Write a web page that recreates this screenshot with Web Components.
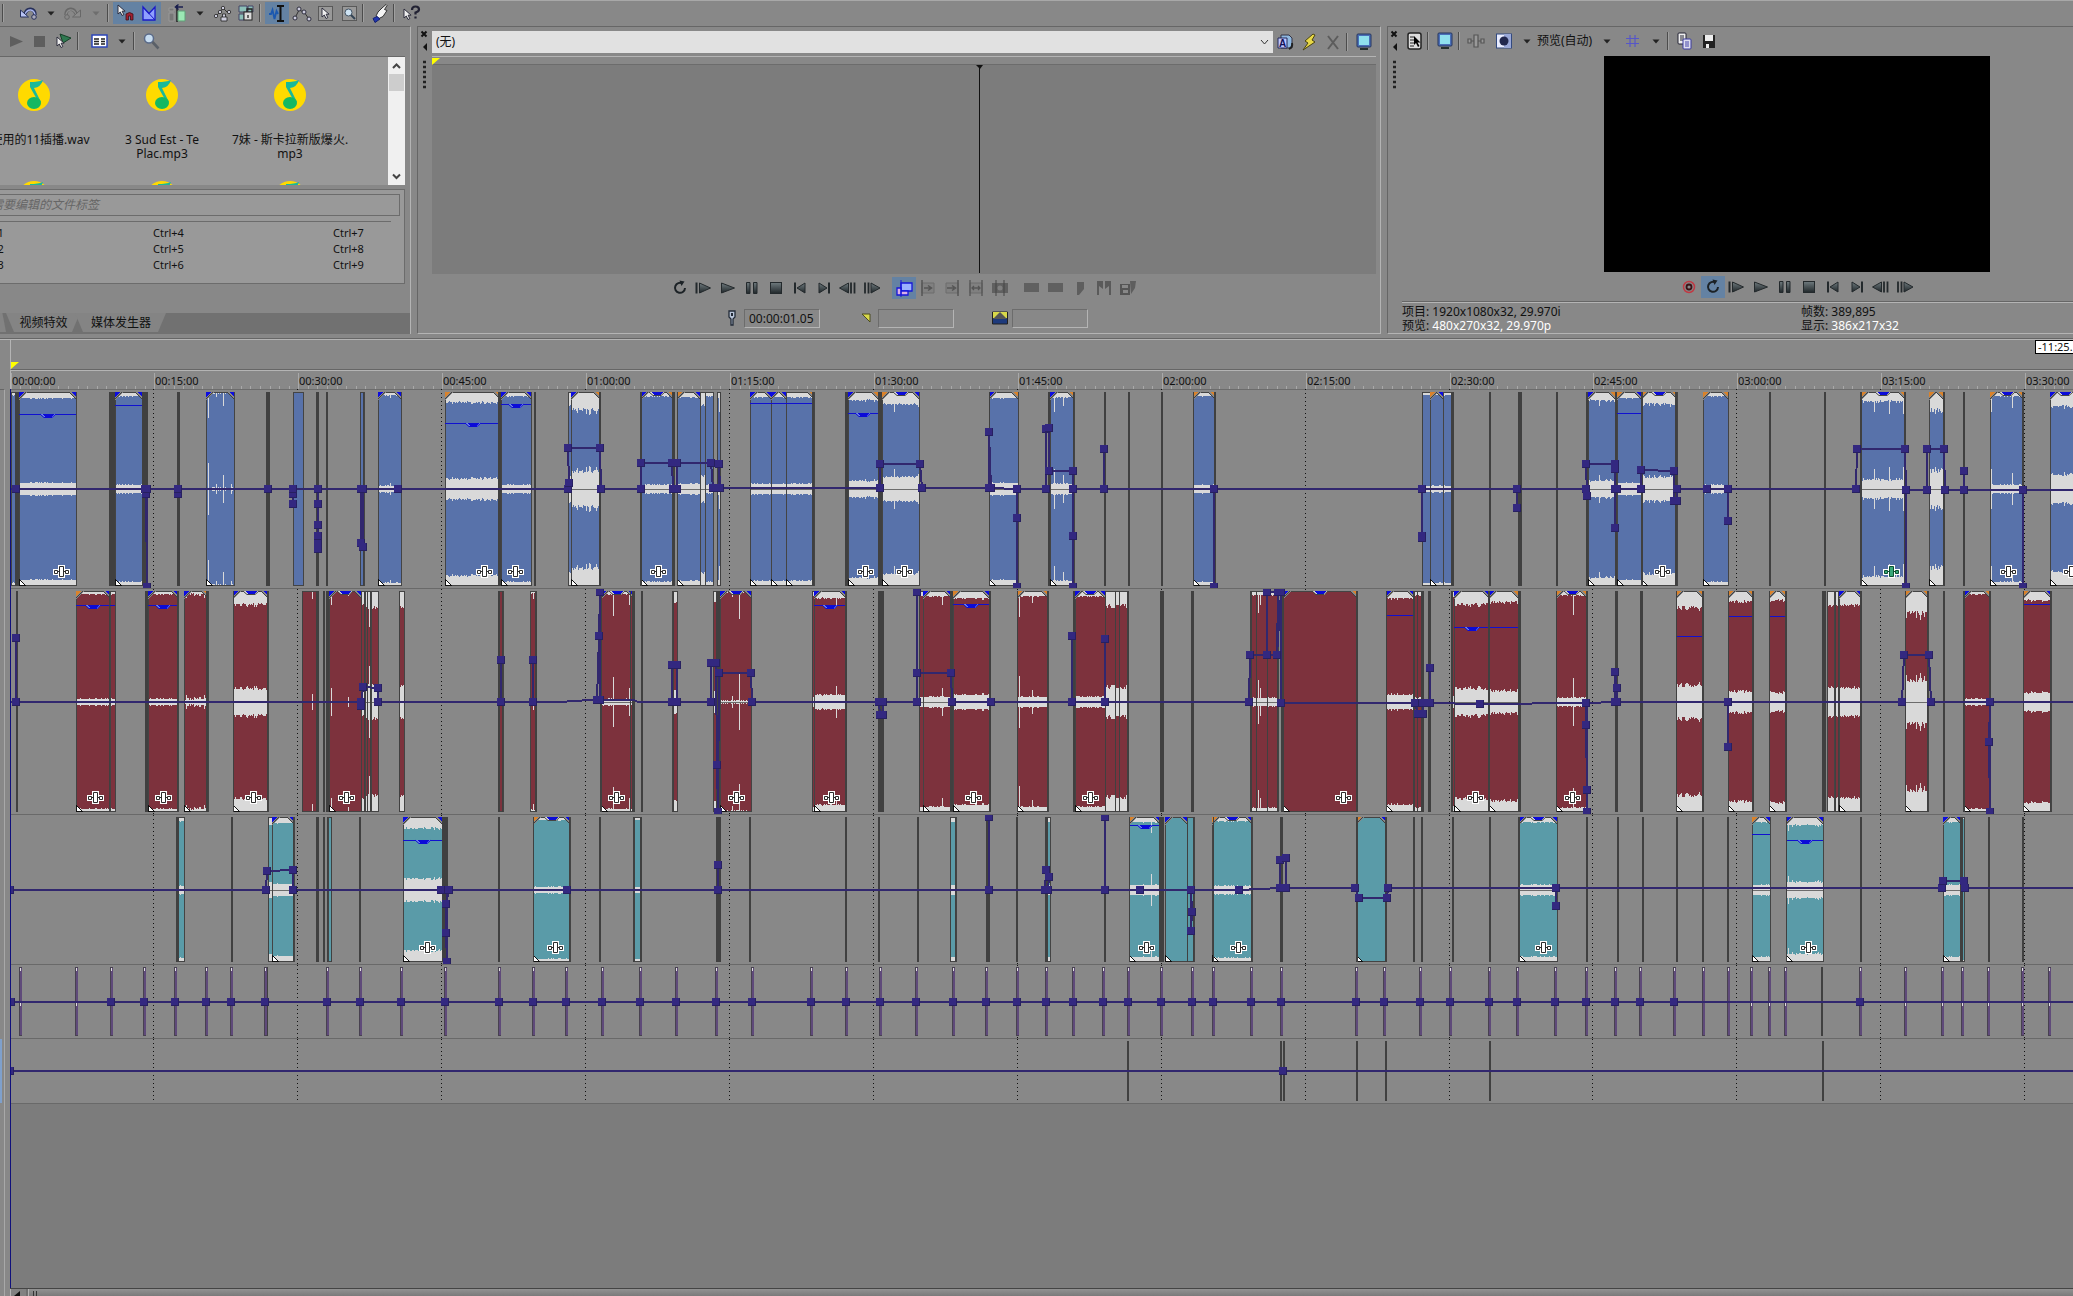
<!DOCTYPE html>
<html lang="zh-CN">
<head>
<meta charset="utf-8">
<title>Timeline editor</title>
<style>
html,body{margin:0;height:100%;overflow:hidden;background:#888}
body{font:12px/14px "Noto Sans","Noto Sans CJK SC",sans-serif;color:#111}
</style>
</head>
<body>
<ve-app></ve-app>
<script>
const define = (name, html, ready) => customElements.define(name, class extends HTMLElement {
  constructor() {
    super();
    this.attachShadow({mode: 'open'}).innerHTML = '<style>*{box-sizing:border-box}button,input,select{font:inherit;color:inherit}</style>' + (typeof html === 'function' ? '' : html);
  }
  connectedCallback() {
    if (this.done) return;
    this.done = true;
    if (typeof html === 'function') this.shadowRoot.innerHTML += html(this);
    if (ready) ready(this, this.shadowRoot);
  }
});

/* ---- icons, on a 24 x 24 grid ---- */
const G = '#6c6c6c';
const arrow = (x, y) => `<path d="M${x} ${y}v9l2.300-2 1.700 3.500 1.800-.9-1.700-3.400h3z" fill="#eee" stroke="#223" stroke-width=".9"/>`;
const monitor = `<rect x="5" y="4" width="14" height="13" rx="1" fill="#4a6fb8" stroke="#26365e"/><rect x="7" y="6" width="10" height="9" fill="#8fe0ee"/><path d="M8 18h8v2h-8z" fill="#26302e"/>`;
const P = `fill="url(#gr)" stroke="#23292c" stroke-width="1"`;
const GR = `<defs><linearGradient id="gr" x1="0" y1="0" x2="0" y2="1"><stop offset="0" stop-color="#6f7a7e"/><stop offset="1" stop-color="#20272a"/></linearGradient></defs>`;
const ICONS = {
  undo: `<path d="M9 13C11 6 19 7 19 14" fill="none" stroke="#27305a" stroke-width="3.500"/><path d="M9 13C12 7 18 8 19 14" fill="none" stroke="#aab6ee" stroke-width="1.500"/><path d="M4.500 9v7h8z" fill="#b9c4f4" stroke="#27305a"/><circle cx="18" cy="16" r="2.300" fill="#aab" stroke="#27305a"/>`,
  redo: `<path d="M15 13C13 6 5 7 5 14" fill="none" stroke="#686868" stroke-width="3.500"/><path d="M15 13C12 7 6 8 5 14" fill="none" stroke="#8c8c8c" stroke-width="1.300"/><path d="M19.500 9v7h-8z" fill="#8c8c8c" stroke="#686868"/><circle cx="6" cy="16" r="2.300" fill="#888" stroke="#686868"/>`,
  caret: `<path d="M8.500 10.500h7l-3.500 4z" fill="#222"/>`,
  caretoff: `<path d="M8.500 10.500h7l-3.500 4z" fill="#6e6e6e"/>`,
  snap: arrow(5, 4) + `<path d="M13 13q3.500-3 7 0v6h-2.500v-4h-2v4h-2.500z" fill="#a02030" stroke="#401018" stroke-width=".8"/>`,
  fadeauto: `<path d="M6 6v13h12v-13l-6 6.500z" fill="#8fa0ff" stroke="#1a1ac8" stroke-width="1.300"/><path d="M6 6l12 13" stroke="#1a1ac8" stroke-width="1"/>`,
  ripple: `<path d="M4 7h5v3h-5zM4 12h5v8h-5z" fill="#777" stroke="#999"/><path d="M12 4v17" stroke="#222" stroke-width="1.500"/><path d="M13 10h7v10h-7z" fill="#9be8b4" stroke="#60a078"/><path d="M18 6h-7M13.500 3.500l-3 2.500 3 2.500" fill="none" stroke="#1a1f50" stroke-width="1.500"/>`,
  lockenv: `<path d="M6 15l4-4 3-4 4 4 3 1" fill="none" stroke="#333"/><g fill="#ccd" stroke="#222" stroke-width=".8"><circle cx="6" cy="15" r="1.700"/><circle cx="10" cy="11" r="1.700"/><circle cx="13" cy="7" r="1.700"/><circle cx="19" cy="11" r="1.700"/><path d="M11 16h6v4h-6zM12.500 16v-3h3v3"/></g>`,
  groups: `<path d="M5 5h8v6h-8zM14 5h5v6h-5zM5 13h5v6h-5z" fill="#8cc0b8" stroke="#446"/><rect x="10" y="11" width="8" height="8" fill="#ddd" stroke="#222"/><path d="M13 11v-3h5v3M14 14v3" fill="none" stroke="#222" stroke-width="1.300"/>`,
  normal: `<path d="M4 13h2l1.500-4 2 9 2-8 1.500 3" fill="none" stroke="#1b58b0" stroke-width="1.800"/><path d="M12 5h7M15.500 5v15M12 20h7" fill="none" stroke="#111" stroke-width="2"/>`,
  envelope: `<path d="M6 17l4-8 5 2 5 7" fill="none" stroke="#333"/><g fill="#ccd" stroke="#223" stroke-width=".9"><circle cx="6" cy="17" r="2"/><circle cx="10" cy="8" r="2"/><circle cx="15" cy="11" r="2"/><circle cx="20" cy="18" r="2"/></g>`,
  select: `<rect x="5.500" y="5.500" width="14" height="14" fill="#999" stroke="#222" stroke-dasharray="1 1"/>` + arrow(9, 7),
  zoomedit: `<rect x="5.500" y="5.500" width="14" height="14" fill="#999" stroke="#222" stroke-dasharray="1 1"/><circle cx="11.500" cy="11.500" r="3.500" fill="#cfe4f4" stroke="#456"/><path d="M14 14l4 4" stroke="#345" stroke-width="2"/>`,
  paint: `<path d="M8 15l2-4 4-4 4-3.500 1 1-2.500 4 2.500 1-4 6-4 2z" fill="#f4f4f4" stroke="#333"/><path d="M5 17.500l4-2 3 2.500-5 3.500z" fill="#2036b0" stroke="#142070"/>`,
  help: arrow(5, 8) + `<path d="M13 9q0-3.500 3.500-3.500t3.500 3q0 2-3.500 3v2" fill="none" stroke="#223" stroke-width="2.200"/><path d="M15.400 15.500h2.200v2h-2.200z" fill="#223"/>`,
  playoff: `<path d="M6 7v11l13-5.500z" fill="#5e5e5e"/>`,
  stopoff: `<rect x="6" y="7" width="11" height="11" fill="#5e5e5e"/>`,
  autoprev: `<path d="M8 5l11 4-8 5z" fill="#2f7850" stroke="#174028"/>` + arrow(5, 8),
  views: `<rect x="5" y="6" width="15" height="12" fill="#fff" stroke="#2c45b8" stroke-width="1.500"/><path d="M7 10h5M7 12.500h5M7 15h5M14 10h4M14 12.500h4M14 15h4" stroke="#222" stroke-width="1.500"/>`,
  search: `<circle cx="10" cy="9.500" r="4.500" fill="#c6dcf0" stroke="#5a6a88" stroke-width="1.500"/><path d="M13.500 13l6 6.500" stroke="#5a6068" stroke-width="2.600"/>`,
  loop: `<path d="M14.500 7.500a5 5 0 1 0 2.500 4.500" fill="none" stroke="#1c2226" stroke-width="2"/><path d="M11.500 4.500l5 1-3 4.500z" fill="#1c2226"/>`,
  playstart: `<path d="M4.500 6.500v11" stroke="#23292c" stroke-width="2"/><path d="M7.500 7v10l11-5z" ${P}/>`,
  play: `<path d="M5.500 7v10l13-5z" ${P}/>`,
  pause: `<path d="M6.500 6.500h3.500v11h-3.500zM13.500 6.500h3.500v11h-3.500z" ${P}/>`,
  stop: `<rect x="6.500" y="6.500" width="11" height="11" ${P}/>`,
  first: `<path d="M7 6.500v11" stroke="#23292c" stroke-width="2"/><path d="M17 7v10l-8-5z" ${P}/>`,
  last: `<path d="M17 6.500v11" stroke="#23292c" stroke-width="2"/><path d="M7 7v10l8-5z" ${P}/>`,
  prev: `<path d="M15 6.500v11M18.500 6.500v11" stroke="#23292c" stroke-width="1.800"/><path d="M12.500 7v10l-9-5z" ${P}/>`,
  next: `<path d="M5 6.500v11M8.500 6.500v11" stroke="#23292c" stroke-width="1.800"/><path d="M11 7v10l9-5z" ${P}/>`,
  overwrite: `<path d="M9 7h11v8h-11z" fill="#9ab0ff" stroke="#1616d8" stroke-width="1.300"/><path d="M5 12h4v7h-4zM9 15h7v4h-7z" fill="#d9b0e8" stroke="#1616d8" stroke-width="1.300"/><path d="M9 4v17" stroke="#1616d8"/>`,
  addup: `<path d="M6 7h12v10h-12z" fill="#808080" stroke="${G}"/><path d="M6 4v16M8 12h7M12 9.500l3.500 2.500-3.500 2.500" fill="none" stroke="#555" stroke-width="1.500"/>`,
  adddown: `<path d="M6 7h12v10h-12z" fill="#808080" stroke="${G}"/><path d="M18 4v16M7 12h7M12 9.500l3.500 2.500-3.500 2.500" fill="none" stroke="#555" stroke-width="1.500"/>`,
  fit: `<path d="M6 7h12v10h-12z" fill="#808080" stroke="${G}"/><path d="M6 4v16M18 4v16M8 12h8M10 10l-2 2 2 2M14 10l2 2-2 2" fill="none" stroke="#555" stroke-width="1.300"/>`,
  slot: `<path d="M4 7h16v10h-16z" fill="#606060"/><path d="M8 4v16M16 4v16" stroke="#444"/><circle cx="12" cy="12" r="2.500" fill="#808080"/>`,
  media: `<path d="M4 7h15v9h-15z" fill="#606060"/>`,
  marker: `<path d="M9 6h7v7l-5 6h-2z" fill="#5e5e5e"/>`,
  markers: `<path d="M5 5h6v8l-4-3v9h-2zM19 5h-6v8l4-3v9h2z" fill="#5a5a5a"/>`,
  savemark: `<path d="M4 8h10v11h-10z" fill="#555"/><path d="M6 9h6v3h-6zM7 14h5v3h-5z" fill="#888"/><path d="M14 5h6l-1 7-4 6z" fill="#5e5e5e"/>`,
  edit: `<path d="M8 5h8l3 3v10h-11z" fill="#8fb8e0" stroke="#334"/><path d="M5 8h9v10h-9z" fill="#bfc6ff" stroke="#22285a"/><path d="M16 19q4-2 3-6" fill="none" stroke="#222" stroke-width="2"/><text x="6" y="17" font-size="10" font-weight="bold" font-family="Liberation Sans" fill="#115">A</text>`,
  bolt: `<path d="M16 4l-8 7 3 2-5 7 12-8-3-2 3-5z" fill="#e8d848" stroke="#4a4410"/>`,
  cross: `<path d="M7 6l10 13M17 6l-10 13" stroke="#5c5c5c" stroke-width="2"/>`,
  monitor,
  props: `<rect x="6" y="4" width="13" height="16" rx="2" fill="#ddd" stroke="#222" stroke-width="1.500"/><path d="M8 8h4M8 11h4M8 14h4M8 17h4" stroke="#222"/><path d="M12 7v9l2-2 2 4 1.500-1-2-3.500h3z" fill="#000"/>`,
  fx: `<path d="M10 6h4v12h-4zM4 10h3v4h-3zM17 10h3v4h-3zM7 12h3M14 12h3" fill="#999" stroke="#555" stroke-width="1.200"/>`,
  split: `<rect x="4.500" y="5" width="15" height="14" fill="#e8ecff" stroke="#334a80"/><path d="M12 5h7v14h-7z" fill="#9aa8d8"/><circle cx="12" cy="12" r="4.500" fill="#22284e"/>`,
  grid: `<path d="M9 6v12M14 6v12M5 9.500h13M5 14.500h13" stroke="#5656c8" stroke-width="1.200"/>`,
  copy: `<rect x="5" y="4" width="8" height="11" rx="1" fill="#eee" stroke="#223"/><path d="M7 7h4M7 9h4M7 11h4" stroke="#223"/><rect x="10" y="10" width="8" height="10" rx="1" fill="#dde" stroke="#3a3aa0"/><path d="M12 13h4M12 15h4M12 17h4" stroke="#44a"/>`,
  save: `<path d="M6 6h12v13h-12z" fill="#222"/><path d="M8 6h8v6h-8zM9 15h3v4h-3z" fill="#eee"/>`,
  record: `<circle cx="12" cy="12" r="5.500" fill="none" stroke="#c03a44" stroke-width="1.500"/><circle cx="12" cy="12" r="2.500" fill="none" stroke="#3a1216" stroke-width="1.800"/>`,
  pin: `<path d="M9 5h6v6l-2 2v6h-2v-6l-2-2z" fill="#b8c4d8" stroke="#222b38" stroke-width="1.300"/><path d="M11 7h2v3h-2z" fill="#222b38"/>`,
  inpoint: `<path d="M8 8h8v8z" fill="#d8d84a" stroke="#4a4a20"/>`,
  selrange: `<path d="M4.500 6h15v12h-15z" fill="#1d3a7c" stroke="#222"/><path d="M5 6h14v6h-14z" fill="#d8d84a"/><path d="M5 13l7-7 7 7z" fill="#555"/>`
};
define('ve-icon', el => `<style>:host{display:block;width:24px;height:24px;flex:none}svg{display:block}</style>
<svg width="24" height="24" viewBox="0 0 24 24" aria-hidden="true">${GR}${ICONS[el.getAttribute('name')]}</svg>`);

define('ve-tool', el => `<style>:host{display:block;width:24px;height:24px;flex:none}:host([caret]){width:21px}
button{display:flex;justify-content:center;width:100%;height:22px;margin:1px 0;padding:0;border:0;background:none;align-items:center;overflow:hidden}
:host([on]) button{background:#6482a3}</style>
<button type="button" aria-label="${el.getAttribute('name')}"><ve-icon name="${el.getAttribute('name')}"></ve-icon></button>`);
define('ve-sep', `<style>:host{display:block;flex:none;width:7px;height:18px}:host::before{content:"";display:block;width:1px;height:18px;margin-left:1px;background:#4c4c4c;box-shadow:1px 0 #a0a0a0}</style>`);
const tools = s => s.trim().split(/\s+/).map(t => t === '|' ? '<ve-sep></ve-sep>' : t === '_' ? '<i class="gap"></i>' :
  `<ve-tool name="${t.replace('*', '')}"${t.endsWith('*') ? ' on' : ''}${t.startsWith('caret') ? ' caret' : ''}></ve-tool>`).join('');
const BAR = `.bar{display:flex;align-items:center;padding-bottom:2px}.gap{width:4px;flex:none}`;

define('ve-grip', `<style>:host{display:flex;flex-direction:column;align-items:center;width:14px;flex:none;padding-top:2px}svg{display:block}</style>
<svg width="14" height="64" aria-hidden="true"><path d="M3.500 2.500l5 5M8.500 2.500l-5 5" stroke="#111" stroke-width="2"/><path d="M9 14v8l-4-4z" fill="#111"/>
<path d="M5 33h3M5 38h3M5 43h3M5 48h3M5 53h3M5 58h3" stroke="#222" stroke-width="2.500"/></svg>`);

/* ---- project media ---- */
const note = `<svg width="32" height="32" viewBox="0 0 32 32" aria-hidden="true"><circle cx="16" cy="16" r="16" fill="#ffda00"/><path d="M12 3q8 0 13-2-2 7-9 8l7 14-2 1-9-16z" fill="#19b99a"/><ellipse cx="16" cy="24" rx="7" ry="6" fill="#14b862"/></svg>`;
define('media-item', `<style>:host{display:block;width:128px;height:102px;flex:none;text-align:center}svg{display:block;margin:22px auto 0}div{margin:22px auto 0;width:124px;line-height:14px}</style>${note}<div><slot></slot></div>`);
define('media-panel', `<style>${BAR}
:host{display:flex;flex-direction:column;border-top:1px solid #666;border-right:1px solid #b4b4b4;min-width:0;overflow:hidden}
.bar{height:29px;padding-left:4px}
.list{display:flex;height:129px;margin-right:5px;border-top:1px solid #686868;background:#999;overflow:hidden}
.items{display:grid;grid-template-columns:repeat(3,128px);flex:1;min-width:0;margin-left:-30px;overflow:hidden}
.scroll{width:17px;background:#f0f0f0;display:flex;flex-direction:column;align-items:center}
.scroll button{border:0;padding:0;background:none;height:17px;width:17px}.scroll svg{display:block}
.thumb{width:15px;height:17px;background:#cdcdcd}.scroll span{flex:1}
.tags{margin:4px 5px 0 0;height:95px;border:1px solid #6c6c6c;border-width:1px 1px 1px 0;background:#999;padding:4px 4px 0 0}
input{display:block;width:100%;height:22px;border:1px solid #6c6c6c;border-left:0;background:#999;padding:0 0 2px;text-indent:-9px;outline:0}
input::placeholder{color:#666;font-style:italic;opacity:1}
dl{margin:5px 0 0 -27px;padding:3px 0 0;border-top:1px solid #6c6c6c;display:grid;grid-template-columns:repeat(3,180px);font-size:11px;line-height:16px;width:418px;overflow:hidden}
dl div{white-space:pre}
.tabs{display:flex;margin-top:auto;height:21px;background:#717171}
.tabs button{border:0;height:19px;padding:0 0 0 1px;background:#848484;clip-path:polygon(0 0,100% 0,calc(100% - 8px) 100%,8px 100%)}
.tabs .a{width:74px}.tabs .b{width:91px;margin-left:-5px}.tabs .z{width:6px;clip-path:polygon(0 0,40% 0,100% 100%,0 100%)}
</style>
<div class="bar">${tools('playoff stopoff autoprev | _ views caret | search')}</div>
<div class="list"><div class="items">
<media-item>可使用的11插播.wav</media-item><media-item>3 Sud Est - Te Plac.mp3</media-item><media-item>7妹 - 斯卡拉新版爆火.<br>mp3</media-item><media-item></media-item><media-item></media-item><media-item></media-item></div>
<div class="scroll"><button aria-label="up"><svg width="17" height="17"><path d="M5 11l3.500-3.500 3.500 3.500" fill="none" stroke="#444" stroke-width="2"/></svg></button><div class="thumb"></div><span></span><button aria-label="down"><svg width="17" height="17"><path d="M5 6.500l3.500 3.500 3.500-3.500" fill="none" stroke="#444" stroke-width="2"/></svg></button></div></div>
<div class="tags"><input aria-label="标签" placeholder="需要编辑的文件标签">
<dl><div>Ctrl+1
Ctrl+2
Ctrl+3</div><div>Ctrl+4
Ctrl+5
Ctrl+6</div><div>Ctrl+7
Ctrl+8
Ctrl+9</div></dl></div>
<div class="tabs"><button class="z" aria-label="tab"></button><button class="a">视频特效</button><button class="b">媒体发生器</button></div>`);

/* ---- trimmer ---- */
define('trimmer-panel', `<style>${BAR}
:host{display:flex;border:1px solid #666;border-right-color:#b4b4b4;border-bottom-color:#b4b4b4;min-width:0}
.body{flex:1;min-width:0;display:flex;flex-direction:column;padding-right:4px}
.top{display:flex;height:29px;align-items:center}
.combo{flex:1;position:relative;display:flex;height:22px}
select{flex:1;appearance:none;border:0;border-radius:0;background:#e1e1e1;padding:0 4px;height:22px;outline:0}
.combo svg{position:absolute;right:4px;top:8px}
.rule{height:9px;border-top:1px solid #b4b4b4;border-bottom:1px solid #6c6c6c}.rule svg{display:block}
.view{height:209px;background:#7c7c7c;position:relative}
.view svg{position:absolute;left:calc(58% - 4px);top:0}
.bar{justify-content:center;height:30px}
.times{display:flex;justify-content:center;align-items:center;height:28px}
.times input{width:76px;height:19px;background:none;border:1px solid #6c6c6c;border-right-color:#b4b4b4;border-bottom-color:#b4b4b4;padding:0 2px 0 4px;outline:0}
.times span{width:34px}
</style><ve-grip></ve-grip><div class="body">
<div class="top"><div class="combo"><select aria-label="媒体"><option>(无)</option></select><svg width="9" height="7"><path d="M1 1l3.500 4 3.500-4" fill="none" stroke="#333"/></svg></div>${tools('edit bolt cross | monitor')}</div>
<div class="rule"><svg width="9" height="8"><path d="M0 1h8l-8 7z" fill="#ff0"/></svg></div>
<div class="view"><svg width="7" height="208"><path d="M0 0h7l-3 4z" fill="#111"/><path d="M3.500 0v208" stroke="#111"/></svg></div>
<div class="bar">${tools('loop playstart play pause stop first last prev next')}<i class="gap"></i><i class="gap"></i>${tools('overwrite* addup adddown fit slot _ _ media media marker markers savemark')}</div>
<div class="times"><ve-icon name="pin"></ve-icon><input aria-label="光标" value="00:00:01.05"><span></span><ve-icon name="inpoint"></ve-icon><input aria-label="入点"><span></span><ve-icon name="selrange"></ve-icon><input aria-label="长度"></div>
</div>`);

/* ---- video preview; the panel runs on past the window's right edge ---- */
define('preview-panel', `<style>${BAR}
:host{display:flex;border:1px solid #666;border-right:0;border-bottom-color:#b4b4b4;min-width:0;overflow:hidden}
.body{flex:1;min-width:0;margin-right:-119px;display:flex;flex-direction:column}
.bar{height:29px;padding-bottom:0}.video{width:386px;height:217px;background:#000;align-self:center}
.play{justify-content:center;height:29px}
.quality{border:0;background:none;padding:0;white-space:nowrap}
.info{border-top:1px solid #666;box-shadow:inset 0 1px #b4b4b4;display:grid;grid-template-columns:399px 1fr;padding-top:3px;line-height:14px;font-size:12px}
.info b{font-weight:normal;color:#fff}
</style><ve-grip></ve-grip><div class="body">
<div class="bar">${tools('props | monitor | fx _ split caret')}<button class="quality">预览(自动)</button>${tools('_ caret _ grid caret | copy save')}</div>
<div class="video"></div>
<div class="bar play">${tools('record loop* playstart play pause stop first last prev next')}</div>
<div class="info"><div>项目: 1920x1080x32, 29.970i</div><div>帧数: 389,895</div><div>预览: <b>480x270x32, 29.970p</b></div><div>显示: <b>386x217x32</b></div></div>
</div>`);

/* ---- time ruler ---- */
const STEP = 143.9, GRID = Array.from({length: 15}, (_, i) => Math.floor(10 + i * STEP));
define('time-ruler', () => {
  let ticks = '';
  for (let i = 0; i < 216; i++) { const x = Math.floor(10 + i * STEP / 15) - 10; ticks += `M${x + .5} ${i % 15 ? 15 : 2}v${i % 15 ? 3 : 16}`; }
  return `<style>:host{display:block;height:19px}svg{display:block;width:100%;height:19px;font-size:11px}</style><svg><path d="${ticks}" stroke="#a8a8a8"/><path d="M0 18.500h3000" stroke="#6c6c6c"/>${GRID.map((x, i) => {
    const s = i * 15, t = n => String(n).padStart(2, '0');
    return `<text x="${x - 9}" y="14" fill="#111">${t(Math.floor(s / 60))}:${t(s % 60)}:00</text>`;
  }).join('')}</svg>`;
});

/* ---- tracks ----
   clip:  "start end depth flags..."  depth = quiet band height
          cLR fade corners (b blue, o orange, - none), gY gain line, hY gain line with handle,
          t handle on the upper edge, fX / FX event effect button, sX:H peak
   bar:   "x width"     env: "x,y" nodes, a trailing ~ marks a bend without a node */
const TRACKS = [
  {top: 389, h: 200, c0: 392, c1: 586, color: '#5872aa',
   clips: `11 15 3;19 76 6 cbb h414 f61;115 142 4 cbb g405;206 234 1 cbb s208:26 s216:5 s223:14 s231:5;293 303 0;360 364 0;378 401 3 cbb s390:6;445 500 10 coo h423 f484;501 531 4 cbb h404 f515;
    568 571 14;571 600 17 cbo j6;641 673 4 cbo t f658;677 700 5 cob;700 705 12;705 713 4;717 720 5 s719:20;750 771 5 cbb g403;771 786 5 cbb g403;786 814 5 c-o g403;847 849 5;848 878 8 cbo h413 f865;882 919 12 cob t f904 s894:20;989 1018 6 cbo;
    1050 1074 5 cbo s1054:20 s1063:14;1193 1215 4 coo;1422 1430 3;1430 1443 3 cob;1443 1451 3;1588 1615 8 cbo s1599:14;1617 1641 6 cob g413;1641 1677 12 coo t f1662;1703 1728 4 coo;
    1861 1905 9 coo t F1891 s1874:20 s1889:22 s1903:22;1929 1943 17 coo j6;1990 2023 4 coo t f2008 s1991:20 s2012:16;2050 2080 14 cb- t f2071`,
   bars: '15 4;109 6;142 6;177 3;266 4;316 3;326 2;360 1;363 1;498 3;534 2;599 2;640 2;672 3;677 1;717 1;720 1;812 2;845 3;878 4;989 1;1048 2;1073 1;1104 2;1128 2;1161 2;1193 1;1214 2;1422 1;1451 3;1489 2;1518 4;1556 2;1586 2;1615 2;1641 2;1675 2;1769 2;1824 2;1860 2;1904 2;1943 2;1963 2;2022 2',
   env: `10,489~ 16,489 145,489 146,494 147,587 147,489 178,489 178,494 178,489 268,489 293,489 293,494 293,504 293,489 318,489 318,504 318,525 318,536 318,544 318,549 318,489 361,489 361,543 363,547 363,489 398,489 568,489 569,483 568,448 600,448 601,489 641,489 641,463 672,463 673,489 677,489 677,463 711,463 713,488 720,488 719,464 719,488~ 880,488 880,464 920,464 922,488 989,488 989,432 991,488 1017,489 1017,518 1017,587 1017,489~
    1046,489 1046,429 1049,428 1049,471 1073,471 1073,489 1073,536 1073,587 1073,489~ 1104,489 1104,449 1104,489~ 1214,489 1214,587 1214,489~ 1422,489 1422,536 1422,538 1422,489~ 1517,489 1517,508 1517,489~ 1586,489 1587,496 1586,464 1615,464 1615,469 1615,528 1615,489 1617,489 1641,489 1641,470 1674,471 1674,501 1677,501 1677,489 1707,489 1728,489 1728,521 1728,489~ 1856,489 1857,449 1905,449 1906,490 1906,587 1906,490~ 1927,490 1927,449 1944,449 1945,490 1964,490 1964,471 1964,490~ 2023,490 2023,587 2023,490~ 2600,490~`},
  {top: 589, h: 226, c0: 591, c1: 812, color: '#7d323d',
   clips: `76 110 3 cob h605 f95;110 115 3 g605;148 178 3 cbb h605 f163;184 208 3 cbo j5 s206:24;233 268 13 cbb t f253;302 317 0 s312:8;329 361 0 cbb t f346 s331:14 s348:5;361 365 14;365 371 15 s369:36;371 378 16 j6;399 404 16;498 503 0;530 535 2 s533:8;601 633 3 cbb t f616 s613:25 s629:14;672 677 11;713 716 11;720 751 1 cbb t f736 s732:6 s739:28;812 814 5;814 846 7 cbb h605 f831 s836:16;919 923 4;923 951 5 cbb s942:14;953 989 7 cob h604 f973;1017 1048 5 coo s1019:26 s1032:12;
    1073 1075 10;1075 1105 5 cbb t f1090;1105 1128 14 s1115:22;1250 1278 4 s1258:22 s1260:14 s1267:18 s1278:30;1283 1357 0 cbo t f1343;1386 1414 7 cbb g615;1414 1423 4;1452 1454 6;1454 1489 13 cbb h627 f1475;1489 1518 11 cbo g627;1556 1587 4 coo t f1572 s1573:24;1676 1703 16 coo g636;1728 1753 10 coo g616 s1752:25;1769 1786 9 coo g616;1827 1834 14;1834 1839 14;1839 1861 14 cbb;1905 1928 22 coo j7;1964 1990 3 cbo;2023 2051 9 cob g604 s2050:24`,
   bars: '16 2;109 1;145 3;177 1;206 2;233 1;267 1;302 1;316 3;323 2;326 3;361 1;364 1;367 1;370 1;399 1;498 2;502 1;535 2;600 2;630 1;632 3;641 2;673 1;716 4;812 1;845 2;878 6;919 1;950 3;989 2;1017 1;1047 1;1073 2;1105 1;1115 1;1119 1;1127 2;1160 4;1191 3;1250 2;1256 1;1267 1;1277 1;1281 3;1356 2;1386 1;1413 2;1417 1;1421 3;1428 3;1451 2;1488 2;1518 3;1556 1;1586 2;1615 3;1640 3;1676 1;1702 2;1728 1;1752 2;1769 1;1785 2;1822 4;1835 1;1838 1;1860 2;1905 1;1927 1;1943 2;1963 2;1989 2;2023 1;2050 1',
   env: `10,702~ 16,702 16,638 16,702~ 361,702 361,706 363,687 378,688 378,702 501,702 501,660 501,702~ 533,702 533,660 533,702~ 566,702~ 568,701~ 597,700 599,636 600,592 600,700 634,700~ 638,702~ 672,702 672,665 677,665 677,702 711,702 711,663 716,663 717,765 718,812 719,673 751,673 752,702 879,702 880,715 883,715 883,702 917,702 917,592 917,673 951,673 952,702 991,702
    1072,702 1072,636 1072,702~ 1105,702 1105,639 1105,702~ 1249,702 1250,655 1267,655 1267,592 1278,592 1277,655 1267,655~ 1277,655~ 1281,592 1281,703 1415,703 1418,714 1423,714 1423,703 1430,703 1430,668 1430,703~ 1480,704 1586,703 1586,725 1587,790 1587,812 1587,703~ 1615,702 1615,672 1617,688 1617,702 1728,702 1728,747 1728,702~ 1902,702 1904,655 1929,655 1931,702 1990,702 1989,742 1990,812 1990,702~ 2600,702~`},
  {top: 815, h: 150, c0: 817, c1: 962, color: '#5a9ba8',
   clips: `178 184 4;268 272 8;272 294 6 cbb;328 331 0;403 442 11 cbb h840 f427;533 570 3 cob t f555;634 640 3;950 956 4;1047 1050 5;1129 1160 5 cob h825 f1146 s1151:16;1165 1187 0 cbb;1187 1194 0;1212 1252 4 cob t f1238;1356 1386 0 cob;1519 1557 5 cbb t f1543;1752 1770 5 cob g834;1786 1823 8 cbb h840 f1808 s1788:14;1943 1961 5 cbb;1961 1964 2`,
   bars: '176 3;231 2;268 1;293 1;316 3;323 2;327 1;331 1;359 2;442 6;498 2;533 1;569 1;599 2;633 2;640 2;716 5;749 2;845 2;878 2;917 2;950 1;955 1;986 4;1016 2;1045 3;1104 2;1129 1;1159 5;1187 1;1193 1;1213 1;1251 1;1280 3;1356 2;1385 2;1413 2;1421 2;1452 2;1489 2;1518 2;1586 2;1617 2;1642 2;1676 2;1702 2;1727 2;1786 1;1860 2;1960 3;1988 2;2022 2',
   env: `10,890 266,890 267,871 293,870 293,890 441,890 449,890 446,904 446,933 447,962 447,890~ 567,890 718,890 718,865 718,890~ 989,890 989,817 989,890~ 1045,890 1046,870 1049,877 1048,890 1105,890 1105,817 1105,890~ 1140,890 1191,890 1192,912 1191,931 1191,890~ 1239,890 1260,889~ 1280,888 1280,860 1286,858 1286,888 1355,888 1359,898 1387,898 1388,888 1556,888 1556,906 1556,888~ 1942,888 1943,881 1964,881 1965,888 2600,888~`},
  {top: 965, h: 74, c0: 967, c1: 1036, color: '#5c4a70', clips: '', bars: '267 1;987 1;1821 2', env: '',
   pins: '21 77 112 145 176 207 232 266 328 361 402 446 500 534 567 603 641 677 717 753 812 847 881 917 954 987 1018 1047 1074 1104 1129 1162 1193 1214 1252 1282 1357 1385 1421 1451 1490 1518 1556 1587 1616 1641 1675 1704 1729 1752 1770 1786 1861 1906 1943 1963 1989 2023 2050'},
  {top: 1039, h: 65, c0: 1041, c1: 1101, color: '#888', clips: '', bars: '1127 2;1280 2;1283 2;1356 2;1385 2;1489 2;1822 2', env: '10,1071 1283,1071 2600,1071~'}
];
const noise = n => { const v = Math.sin(n * 12.9898) * 43758.5453; return v - Math.floor(v); };
const rect = (x, y, w, h, f) => `<rect x="${x}" y="${y}" width="${w}" height="${h}" fill="${f}"/>`;

function drawClip(src, t) {
  const [a, b, depth, ...flags] = src.trim().split(/\s+/);
  const x0 = +a, x1 = +b, d = +depth, mid = Math.round((t.c0 + t.c1) / 2), w = x1 - x0;
  let jitter = d ? Math.max(1.5, d / 4) : 0; const peaks = {}; let over = '';
  flags.forEach(f => {
    const v = f.slice(1);
    if (f[0] === 'j') jitter = +v;
    if (f[0] === 's') { const [px, ph] = v.split(':'); peaks[px] = +ph; }
    if (f[0] === 'g' || f[0] === 'h') over += rect(x0, +v, w, 1, '#1010d0');
    if (f[0] === 'h' || f === 't') {
      const y = f === 't' ? t.c0 : +v, c = Math.round((x0 + x1) / 2);
      over += `<path d="M${c - 8} ${y}h16l-4 4h-8z" fill="${f === 't' ? '#d9d9d9' : '#7088e8'}"/><path d="M${c - 6} ${y}h12l-3 3h-6z" fill="#0b0bd8"/><path d="M${c - 8} ${y}l4 3.500h8l4-3.500" fill="none" stroke="${f === 't' ? '#444' : '#0b0bd8'}" stroke-width="1" shape-rendering="auto"/>`;
    }
    if (f[0] === 'c') {
      const col = {b: '#0c0ce0', o: '#d9822b'};
      if (col[v[0]]) over += `<path d="M${x0} ${t.c0}h8l-8 8z" fill="#888"/><path d="M${x0 + 7} ${t.c0}l-7 7" stroke="#404040"/><path d="M${x0} ${t.c0}h5l-5 5z" fill="${col[v[0]]}"/>`;
      if (col[v[1]]) over += `<path d="M${x1} ${t.c0}h-8l8 8z" fill="#888"/><path d="M${x1 - 7} ${t.c0}l7 7" stroke="#404040"/><path d="M${x1} ${t.c0}h-5l5 5z" fill="${col[v[1]]}"/>`;
      over += `<path d="M${x0 + .5} ${t.c1 - 6.500}v6h6z" fill="#fff" stroke="#111"/>`;
    }
    if (f[0] === 'f' || f[0] === 'F') {
      const y = t.c1 - 14, s = `M${v - 2} ${y - 5}h4v10h-4zM${v - 7} ${y - 1}h3v3h-3zM${+v + 4} ${y - 1}h3v3h-3zM${v - 4} ${y}h2M${+v + 2} ${y}h2`;
      const green = f[0] === 'F';
      over += `<g shape-rendering="auto" transform="translate(.5 -.5)"><path d="${s}" fill="#fff" stroke="#fff" stroke-width="3"/><path d="${s}" fill="${green ? '#38a878' : '#fff'}" stroke="${green ? '#0c5030' : '#2c2c2c'}"/></g>`;
    }
  });
  let wave = '';
  if (d || Object.keys(peaks).length) for (let x = x0; x < x1; x++) {
    const h = Math.round(d - jitter * .3 + noise(x) * jitter * (noise(x * 3) > .6 ? 1.300 : .7)), p = Math.max(h, peaks[x] || 0, d ? 1 : 0);
    if (p > 0) wave += `M${x} ${t.c0}h1v${p}h-1zM${x} ${mid - p}h1v${2 * p}h-1zM${x} ${t.c1 - p}h1v${p}h-1z`;
  }
  return rect(x0, t.c0, w, t.c1 - t.c0, t.color) + `<path d="${wave}" fill="#d9d9d9"/>` +
    rect(x0, mid, w, 1, d ? '#6c6c6c' : t.color) + `<rect x="${x0 + .5}" y="${t.c0 + .5}" width="${w}" height="${t.c1 - t.c0 - 1}" fill="none" stroke="#444"/>` + over;
}
const node = (x, y) => rect(x - 4, y - 4, 8, 8, '#272060') + rect(x - 4, y - 4, 7, 7, '#332880');
function drawTrack(t) {
  let s = GRID.slice(1).map(x => `<path d="M${x + .5} ${t.top}v${t.h}" stroke="#111" stroke-dasharray="1 3"/>`).join('');
  t.clips.split(';').filter(c => c.trim()).forEach(c => s += drawClip(c, t));
  t.bars.split(';').forEach(b => { const [x, w] = b.split(' '); s += rect(+x, t.c0, w, t.c1 - t.c0, '#404040'); });
  if (t.pins) {
    const p = t.pins.split(' ').map(Number);
    p.forEach(x => s += rect(x - 2, t.c0, 3, 69, '#484150') + rect(x - 1, t.c0 + 1, 2, 67, '#5f4a7a') + rect(x - 1, t.c0 + 1, 1, 3, '#e0e0e0') + (x < 100 || x > 1740 ? rect(x - 1, 1003, 1, 3, '#e0e0e0') : ''));
    s += rect(10, 1001, 3000, 2, '#31276e') + node(11, 1002) + p.filter(x => x > 100 && x < 1700 || x === 1861).map(x => node(x - 1, 1002)).join('');
  }
  const pts = t.env.trim().split(/\s+/).filter(Boolean);
  if (pts.length) {
    s += `<path d="M${pts.map(q => q.replace('~', '')).join('L')}" fill="none" stroke="#31276e" stroke-width="2"/>`;
    pts.forEach(q => { if (!q.endsWith('~')) { const [x, y] = q.split(','); s += node(+x, +y); } });
  }
  return s;
}
define('ve-track', el => {
  const t = TRACKS[el.getAttribute('index')];
  return `<style>:host{display:block;border-bottom:1px solid #696969}svg{display:block;width:100%;height:${t.h - 1}px}</style>
<svg role="img" aria-label="track ${+el.getAttribute('index') + 1}" shape-rendering="crispEdges"><g transform="translate(-11 ${-t.top})">${drawTrack(t)}</g></svg>`;
});

define('ve-timeline', `<style>
:host{display:flex;flex:1;min-height:0;border-top:1px solid #b4b4b4}
.gutter{width:10px;flex:none;display:flex;flex-direction:column;padding-top:49px}
.gutter::after{content:"";flex:1;width:4px;border-right:1px solid #a8a8a8;border-top:1px solid #666;background:linear-gradient(#7fa0cc,#7fa0cc) 0 649px/2px 64px no-repeat}
.main{flex:1;min-width:0;display:flex;flex-direction:column}
.marks{height:30px;border-left:1px solid #b4b4b4;border-bottom:1px solid #666;display:flex;align-items:flex-end;justify-content:space-between;position:relative}
.marks svg{display:block}
.tip{position:absolute;right:-4px;top:0;width:42px;height:14px;border:1px solid #000;background:#fff;font-size:11px;line-height:12px;padding-left:2px;white-space:nowrap}
time-ruler{border-top:1px solid #b4b4b4;border-left:1px solid #b4b4b4;height:19px}
.tracks{flex:1;display:flex;flex-direction:column;border-left:1px solid #10107c;min-height:0}
.empty{flex:1;background:#7c7c7c}
.scroll{height:8px;border-top:1px solid #444;background:#707070;display:flex;gap:2px}
.scroll button,.thumb{border:0;border-left:1px solid #b4b4b4;background:#7a7a7a;padding:0}
.scroll button{width:16px;background:#828282}.scroll svg{display:block}.thumb{flex:1;background:linear-gradient(#929292,#7a7a7a)}
</style><div class="gutter"></div><div class="main">
<div class="marks"><svg width="9" height="8"><path d="M0 1h8l-8 7z" fill="#ff0"/></svg><div class="tip">-11:25.</div></div>
<time-ruler></time-ruler>
<div class="tracks">${TRACKS.map((_, i) => `<ve-track index="${i}"></ve-track>`).join('')}<div class="empty"></div></div>
<div class="scroll"><button aria-label="left"><svg width="14" height="7"><path d="M9 2v5h-6z" fill="#111"/></svg></button><div class="thumb"><svg width="12" height="7"><path d="M4.500 2v5M7.500 2v5" stroke="#333"/></svg></div></div>
</div>`);

define('ve-app', `<style>${BAR}
:host{display:flex;flex-direction:column;height:100vh;min-height:0}
.main{height:26px;flex:none;border-top:1px solid #a8a8a8;padding-left:1px}
.panels{display:grid;grid-template-columns:411px 964fr 686fr;gap:6px;height:308px;flex:none}
.edge{height:5px;flex:none;border-bottom:1px solid #666}
</style>
<div class="bar main">${tools('| _ _ undo caret redo caretoff | snap* fadeauto* _ ripple caret lockenv groups | normal* envelope select zoomedit | paint | help')}</div>
<div class="panels"><media-panel></media-panel><trimmer-panel></trimmer-panel><preview-panel></preview-panel></div>
<div class="edge"></div>
<ve-timeline></ve-timeline>`);
</script>
</body>
</html>
